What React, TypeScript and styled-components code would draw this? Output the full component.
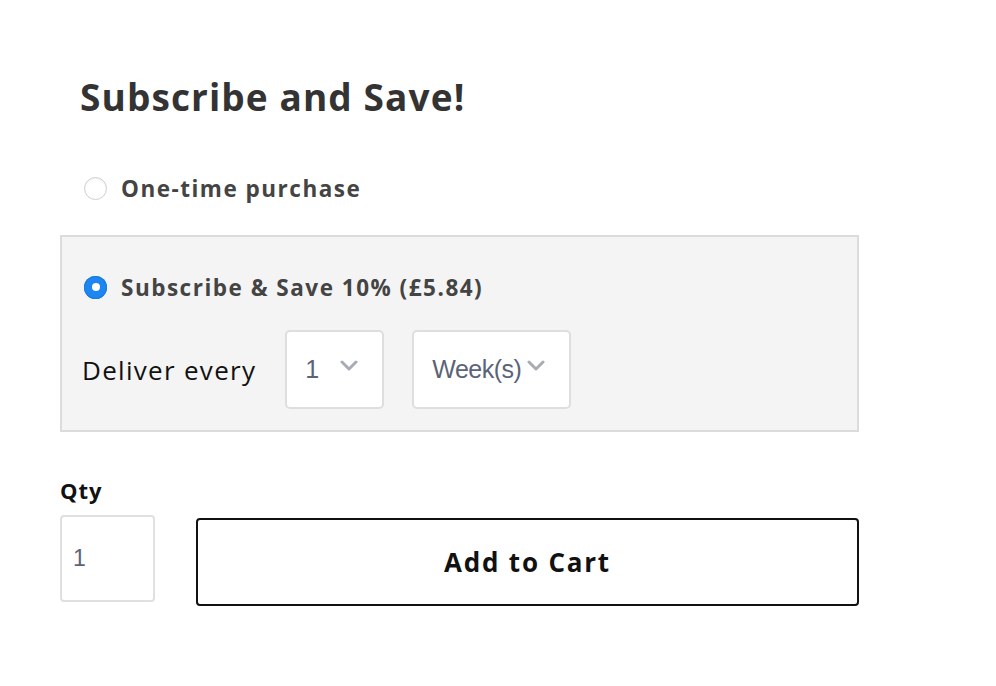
import React from "react";
import styled, { createGlobalStyle } from "styled-components";

const Global = createGlobalStyle`
  html, body { margin: 0; padding: 0; background: #fff; }
  body { font-family: "Open Sans", "Noto Sans", sans-serif; }
  * { box-sizing: border-box; }
`;

const FONT = `"Open Sans", "Noto Sans", sans-serif`;

const Page = styled.div`
  width: 996px;
  height: 686px;
  padding: 60px 0 0 60px;
  display: flex;
  flex-direction: column;
`;

const Title = styled.h1`
  margin: 12px 0 0 20px;
  font-family: ${FONT};
  font-weight: 700;
  font-size: 37px;
  line-height: 50px;
  color: #333;
  letter-spacing: 1.1px;
`;

const OptionRow = styled.label`
  display: flex;
  align-items: center;
  gap: 14px;
  padding-left: 24px;
  height: 44px;
  margin-top: 44px;
  margin-bottom: 25px;
`;

const Radio = styled.span<{ $checked?: boolean }>`
  width: 23px;
  height: 23px;
  border-radius: 50%;
  flex: none;
  ${(p) =>
    p.$checked
      ? `background: #1e86f0; box-shadow: inset 0 0 0 1px #1a7be0;`
      : `background: #fff; border: 1px solid #cfcfcf; box-shadow: inset 0 1px 2px rgba(0,0,0,0.06);`}
  display: flex;
  align-items: center;
  justify-content: center;
  &::after {
    content: "";
    display: ${(p) => (p.$checked ? "block" : "none")};
    width: 8px;
    height: 8px;
    border-radius: 50%;
    background: #fff;
  }
`;

const OptionText = styled.span`
  font-family: ${FONT};
  font-weight: 700;
  font-size: 22.5px;
  color: #444;
  letter-spacing: 1.5px;
`;

const Box = styled.div`
  width: 799px;
  height: 197px;
  background: #f4f4f4;
  border: 2px solid #dcdcdc;
  display: flex;
  flex-direction: column;
`;

const BoxOption = styled(OptionRow)`
  margin: 28px 0 0 0;
  padding-left: 22px;
`;

const DeliverRow = styled.div`
  display: flex;
  align-items: center;
  margin-top: 21px;
  padding-left: 20px;
`;

const DeliverLabel = styled.span`
  font-family: ${FONT};
  font-size: 26px;
  color: #111;
  letter-spacing: 1.3px;
  margin-right: 29px;
`;

const Select = styled.div<{ $w: number }>`
  width: ${(p) => p.$w}px;
  height: 79px;
  background: #fff;
  border: 2px solid #dedede;
  border-radius: 5px;
  display: flex;
  align-items: center;
  padding-left: 18px;
  margin-right: 28px;
  font-family: "Liberation Sans", Arial, sans-serif;
  font-size: 25px;
  color: #5a6479;
  letter-spacing: -0.5px;
`;

const Chevron = styled.svg<{ $gap: number }>`
  margin-left: ${(p) => p.$gap}px;
  margin-top: -8px;
  flex: none;
`;

const QtyLabel = styled.div`
  margin-top: 44px;
  font-family: ${FONT};
  font-weight: 700;
  font-size: 22px;
  color: #111;
  line-height: 28px;
  letter-spacing: 1px;
`;

const BottomRow = styled.div`
  display: flex;
  align-items: flex-start;
  margin-top: 11px;
`;

const QtyInput = styled.div`
  width: 95px;
  height: 87px;
  border: 2px solid #e0e0e0;
  border-radius: 4px;
  display: flex;
  align-items: center;
  padding-left: 11px;
  font-family: "Liberation Sans", Arial, sans-serif;
  font-size: 23px;
  color: #5a6479;
`;

const CartButton = styled.button`
  margin-left: 41px;
  margin-top: 3px;
  width: 663px;
  height: 88px;
  background: #fff;
  border: 2px solid #111;
  border-radius: 4px;
  font-family: ${FONT};
  font-weight: 700;
  font-size: 26px;
  color: #111;
  letter-spacing: 1.8px;
  cursor: pointer;
`;

const ChevronIcon = ({ gap }: { gap: number }) => (
  <Chevron $gap={gap} width="18" height="11" viewBox="0 0 18 11">
    <path d="M2 2 L9 9 L16 2" fill="none" stroke="#a8adb5" strokeWidth="3" strokeLinecap="round" strokeLinejoin="round" />
  </Chevron>
);

export default function App() {
  return (
    <>
      <Global />
      <Page>
        <Title>Subscribe and Save!</Title>
        <OptionRow>
          <Radio />
          <OptionText>One-time purchase</OptionText>
        </OptionRow>
        <Box>
          <BoxOption>
            <Radio $checked />
            <OptionText>Subscribe &amp; Save 10% (£5.84)</OptionText>
          </BoxOption>
          <DeliverRow>
            <DeliverLabel>Deliver every</DeliverLabel>
            <Select $w={99}>
              1
              <ChevronIcon gap={21} />
            </Select>
            <Select $w={159}>
              Week(s)
              <ChevronIcon gap={6} />
            </Select>
          </DeliverRow>
        </Box>
        <QtyLabel>Qty</QtyLabel>
        <BottomRow>
          <QtyInput>1</QtyInput>
          <CartButton>Add to Cart</CartButton>
        </BottomRow>
      </Page>
    </>
  );
}
